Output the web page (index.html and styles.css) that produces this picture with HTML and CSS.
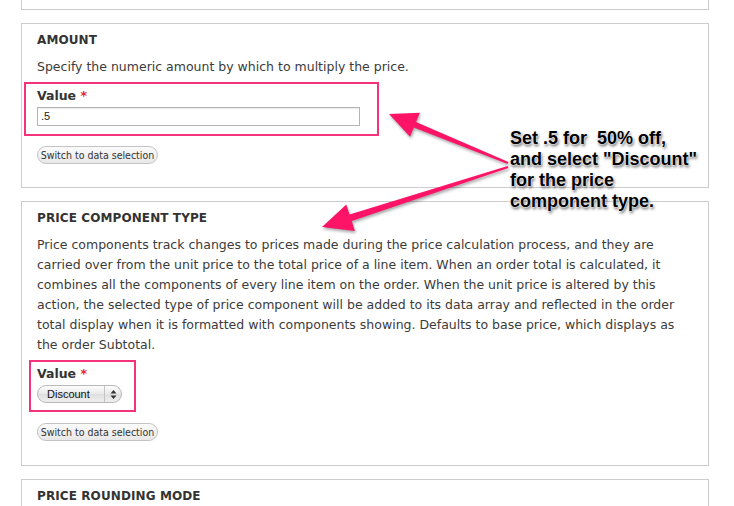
FILE: index.html
```html
<!DOCTYPE html>
<html>
<head>
<meta charset="utf-8">
<link rel="stylesheet" href="styles.css">
</head>
<body>
<div class="page">
  <section class="panel panel-stub"></section>

  <section class="panel">
    <h3 class="panel-title">Amount</h3>
    <p class="desc">Specify the numeric amount by which to multiply the price.</p>
    <div class="hl hl-amount">
      <label class="field-label">Value <span class="req">*</span></label>
      <div class="text-input">.5</div>
    </div>
    <button class="pill">Switch to data selection</button>
  </section>

  <section class="panel panel-tall">
    <h3 class="panel-title">Price component type</h3>
    <p class="desc para">Price components track changes to prices made during the price calculation process, and they are carried over from the unit price to the total price of a line item. When an order total is calculated, it combines all the components of every line item on the order. When the unit price is altered by this action, the selected type of price component will be added to its data array and reflected in the order total display when it is formatted with components showing. Defaults to base price, which displays as the order Subtotal.</p>
    <div class="hl hl-select">
      <label class="field-label field-label-tight">Value <span class="req">*</span></label>
      <div class="select"><span class="select-text">Discount</span><span class="select-arrows"><svg width="7" height="11" viewBox="0 0 7 11"><path d="M3.5 1 L6.5 4.5 H0.5 Z M3.5 10 L6.5 6.5 H0.5 Z" fill="#333"/></svg></span></div>
    </div>
    <button class="pill pill-2">Switch to data selection</button>
  </section>

  <section class="panel">
    <h3 class="panel-title">Price rounding mode</h3>
  </section>
</div>

<svg class="arrows" width="734" height="506" viewBox="0 0 734 506">
  <g class="arrow-shapes">
    <polygon points="389,114 419.9,112.7 416.0,121.9 508.4,162.1 507.6,163.9 413.8,127.5 410,136.7"/>
    <polygon points="322,227 346.3,204.5 349.5,214.5 507.6,165.9 508.4,168.1 351.7,221.1 354.9,231.1"/>
  </g>
</svg>

<div class="note">Set .5 for&nbsp; 50% off,<br>and select "Discount"<br>for the price<br>component type.</div>
</body>
</html>
```

FILE: styles.css
```css
html, body {
  margin: 0;
  padding: 0;
  background: #fff;
}

body {
  width: 734px;
  height: 506px;
  overflow: hidden;
  position: relative;
  font-family: "DejaVu Sans", Verdana, sans-serif;
  color: #3b3b3b;
}

.page {
  display: flex;
  flex-direction: column;
  gap: 13px;
  padding-left: 21px;
  width: 688px;
}

.panel {
  border: 1px solid #cccccc;
  padding: 8px 15px 23px;
  box-sizing: border-box;
}

.panel-tall {
  padding-bottom: 24px;
}

.panel-stub {
  border-top: none;
  height: 10px;
  padding: 0;
}

.panel-title {
  margin: 0;
  font-size: 12px;
  line-height: 16px;
  font-weight: bold;
  text-transform: uppercase;
  color: #333;
  letter-spacing: 0.1px;
}

.desc {
  margin: 9px 0 5px;
  font-size: 12.5px;
  line-height: 20px;
  color: #3b3b3b;
}

.para {
  margin-top: 9px;
}

.hl {
  border: 2px solid #f5337a;
  box-sizing: border-box;
}

.hl-amount {
  margin-left: -13px;
  width: 355px;
  padding: 4px 0 8px 11px;
}

.hl-select {
  margin-left: -8px;
  width: 107px;
  padding: 4px 0 7px 6px;
}

.field-label {
  display: block;
  font-size: 12.5px;
  line-height: 16px;
  font-weight: bold;
  color: #333;
  margin-bottom: 3px;
}

.field-label-tight {
  margin-bottom: 3px;
}

.req {
  color: #e0242c;
}

.text-input {
  width: 323px;
  height: 19px;
  box-sizing: border-box;
  border: 1px solid #b4b4b4;
  box-shadow: inset 0 1px 1px rgba(0,0,0,0.08);
  font-family: "Liberation Sans", Arial, sans-serif;
  font-size: 11px;
  line-height: 17px;
  padding-left: 3px;
  color: #222;
}

.select {
  display: flex;
  align-items: center;
  width: 85px;
  height: 18px;
  box-sizing: border-box;
  border: 1px solid #b9b9b9;
  border-radius: 9px;
  background: linear-gradient(#fdfdfd, #e9e9e9 50%, #dedede 51%, #efefef);
  font-family: "Liberation Sans", Arial, sans-serif;
  font-size: 11px;
  color: #111;
}

.select-text {
  flex: 1;
  padding-left: 9px;
}

.select-arrows {
  width: 16px;
  height: 100%;
  border-left: 1px solid #c4c4c4;
  display: flex;
  align-items: center;
  justify-content: center;
}

.pill {
  display: block;
  margin-top: 10px;
  width: 121px;
  height: 18px;
  padding: 0;
  box-sizing: border-box;
  border: 1px solid #c4c4c4;
  border-radius: 9px;
  background: linear-gradient(#fbfbfb, #e8e8e8);
  font-family: "DejaVu Sans Condensed", "DejaVu Sans", sans-serif;
  font-size: 10.5px;
  line-height: 16px;
  color: #333;
  text-align: center;
}

.pill-2 {
  margin-top: 11px;
}

.arrows {
  position: absolute;
  left: 0;
  top: 0;
  pointer-events: none;
}

.arrow-shapes {
  fill: #fe1466;
  filter: drop-shadow(1px 2px 1.5px rgba(0,0,0,0.35));
}

.note {
  position: absolute;
  left: 510px;
  top: 128px;
  font-family: "Liberation Sans", Arial, sans-serif;
  font-weight: bold;
  font-size: 18px;
  line-height: 21px;
  color: #000;
  white-space: nowrap;
  text-shadow: 0 0 1px #fff, 0 0 2px #fff, 0 0 2px #fff, 1px 2px 3px rgba(0,0,0,0.7);
}
```
